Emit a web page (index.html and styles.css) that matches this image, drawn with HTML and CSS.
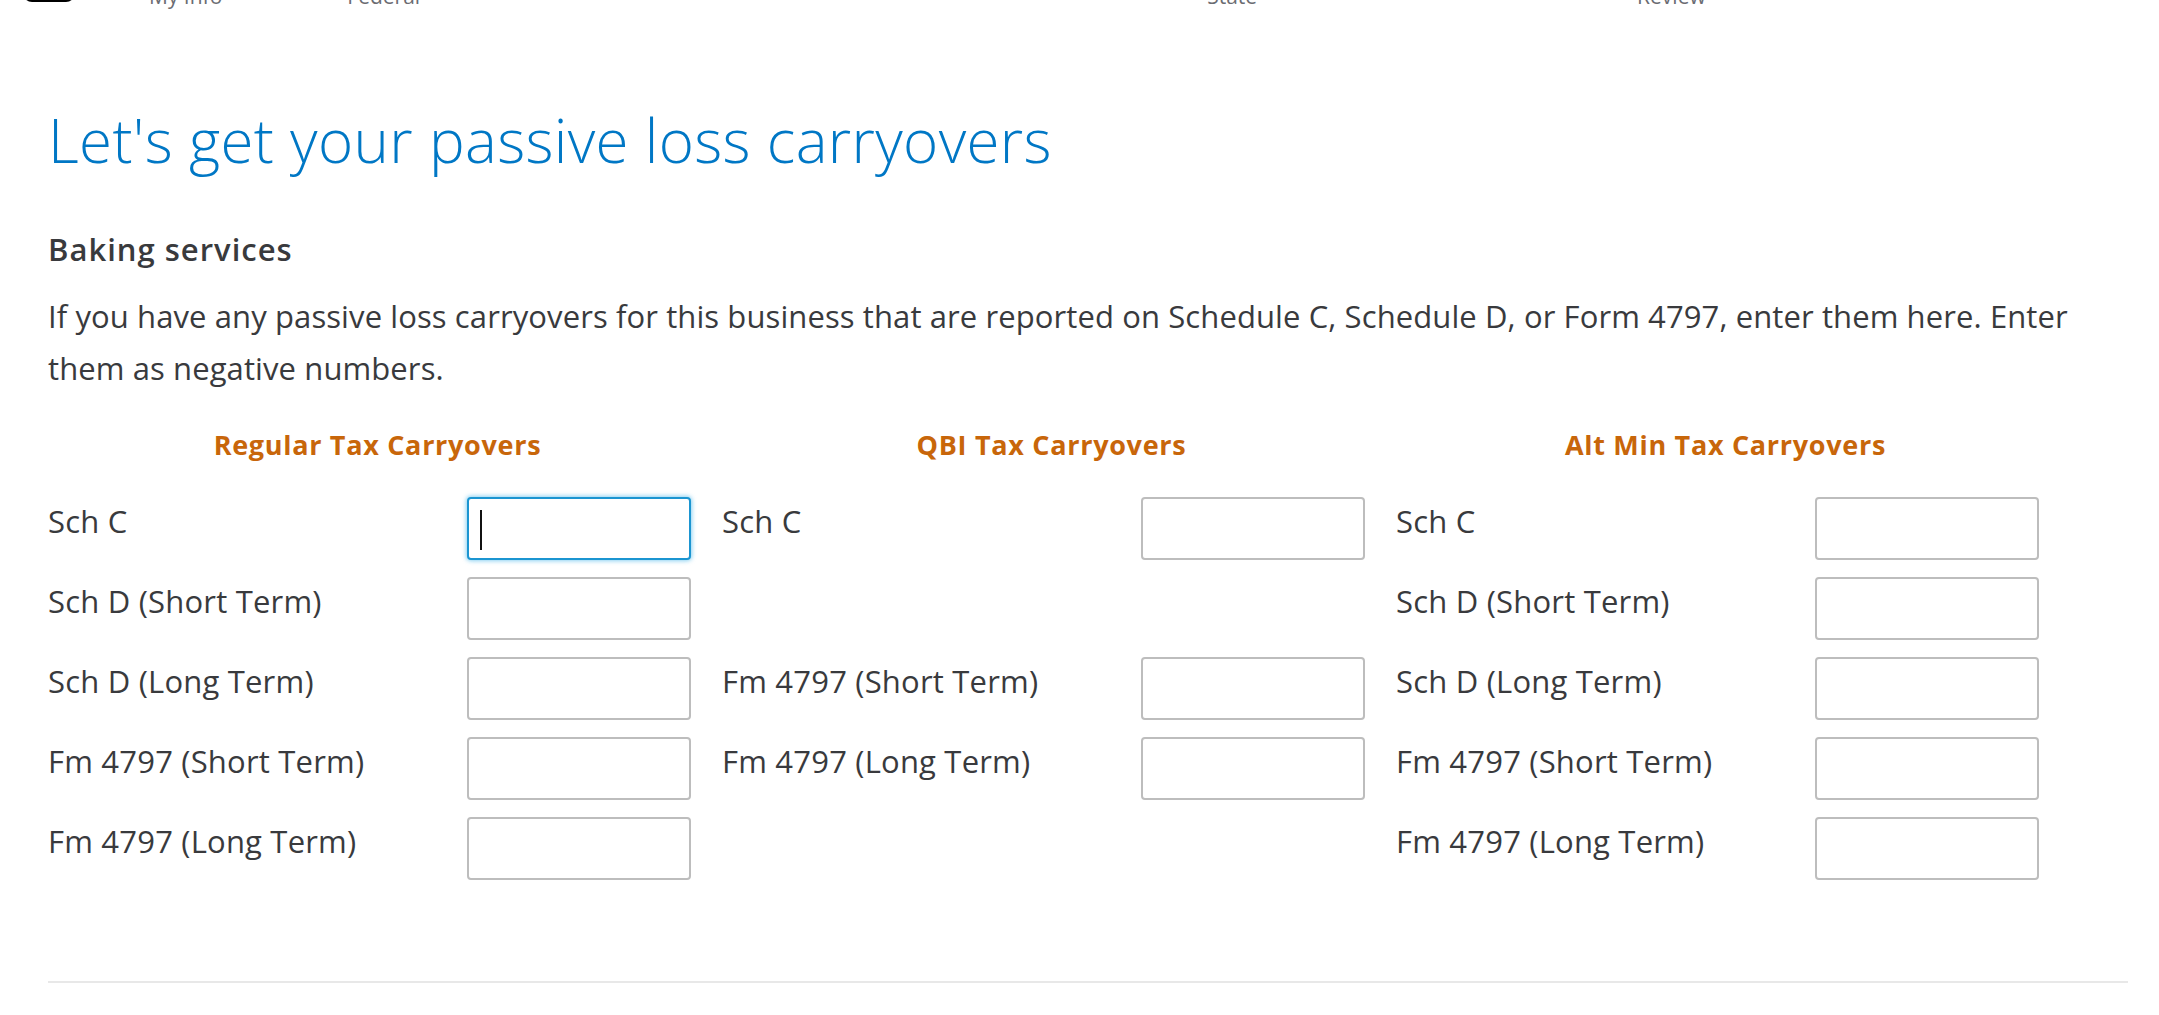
FILE: index.html
```html
<!DOCTYPE html>
<html lang="en">
<head>
<meta charset="utf-8">
<title>Passive loss carryovers</title>
<link rel="stylesheet" href="styles.css">
</head>
<body>
<div class="page">
  <nav class="stepper">
    <div class="logo"></div>
    <span class="step step-myinfo">My Info</span>
    <span class="step step-federal">Federal</span>
    <span class="step step-state">State</span>
    <span class="step step-review">Review</span>
  </nav>

  <h1 class="title">Let's get your passive loss carryovers</h1>
  <h2 class="subtitle">Baking services</h2>
  <p class="intro">If you have any passive loss carryovers for this business that are reported on Schedule C, Schedule D, or Form 4797, enter them here. Enter them as negative numbers.</p>

  <div class="grid">
    <section class="col">
      <h3 class="col-head">Regular Tax Carryovers</h3>
      <div class="row"><label class="lbl">Sch C</label><span class="field-wrap"><input class="field focused" type="text" aria-label="Regular Sch C"><span class="caret"></span></span></div>
      <div class="row"><label class="lbl">Sch D (Short Term)</label><input class="field" type="text"></div>
      <div class="row"><label class="lbl">Sch D (Long Term)</label><input class="field" type="text"></div>
      <div class="row"><label class="lbl">Fm 4797 (Short Term)</label><input class="field" type="text"></div>
      <div class="row"><label class="lbl">Fm 4797 (Long Term)</label><input class="field" type="text"></div>
    </section>
    <section class="col">
      <h3 class="col-head">QBI Tax Carryovers</h3>
      <div class="row"><label class="lbl">Sch C</label><input class="field" type="text"></div>
      <div class="row empty"></div>
      <div class="row"><label class="lbl">Fm 4797 (Short Term)</label><input class="field" type="text"></div>
      <div class="row"><label class="lbl">Fm 4797 (Long Term)</label><input class="field" type="text"></div>
      <div class="row empty"></div>
    </section>
    <section class="col">
      <h3 class="col-head">Alt Min Tax Carryovers</h3>
      <div class="row"><label class="lbl">Sch C</label><input class="field" type="text"></div>
      <div class="row"><label class="lbl">Sch D (Short Term)</label><input class="field" type="text"></div>
      <div class="row"><label class="lbl">Sch D (Long Term)</label><input class="field" type="text"></div>
      <div class="row"><label class="lbl">Fm 4797 (Short Term)</label><input class="field" type="text"></div>
      <div class="row"><label class="lbl">Fm 4797 (Long Term)</label><input class="field" type="text"></div>
    </section>
  </div>

  <hr class="divider">
</div>
</body>
</html>
```

FILE: styles.css
```css
html, body {
  margin: 0;
  padding: 0;
  background: #ffffff;
}

body {
  font-family: "Open Sans", Lato, "Liberation Sans", sans-serif;
  color: #393a3d;
  overflow: hidden;
}

.page {
  padding: 0 31px 0 48px;
}

.stepper {
  height: 10px;
  display: flex;
  align-items: flex-start;
  margin-left: -48px;
}

.logo {
  width: 52px;
  height: 22px;
  margin-top: -20px;
  margin-left: 23px;
  background: #000;
  border-radius: 9px;
}

.step {
  margin-top: -15px;
  font-size: 21px;
  line-height: 22px;
  color: #6b6c72;
}

.step-myinfo { margin-left: 74px; }
.step-federal { margin-left: 125px; }
.step-state { margin-left: 787px; }
.step-review { margin-left: 380px; }

.title {
  margin: 95px 0 0;
  font-size: 60px;
  line-height: 70px;
  font-weight: 300;
  letter-spacing: 0.35px;
  color: #0077c5;
}

.subtitle {
  margin: 56px 0 0;
  font-size: 31px;
  line-height: 36px;
  font-weight: 600;
  letter-spacing: 1px;
  color: #393a3d;
}

.intro {
  margin: 23px 0 0;
  font-size: 31px;
  line-height: 52px;
  letter-spacing: 0.1px;
  color: #393a3d;
}

.grid {
  margin-top: 35px;
  display: grid;
  grid-template-columns: 643px 643px 643px;
  column-gap: 31px;
}

.col {
  display: flex;
  flex-direction: column;
  gap: 17px;
}

.col-head {
  margin: 0 0 19px;
  padding-left: 16px;
  text-align: center;
  font-size: 27px;
  line-height: 32px;
  font-weight: 700;
  letter-spacing: 0.7px;
  color: #c8660a;
}

.row {
  height: 63px;
  display: flex;
  justify-content: space-between;
  align-items: flex-start;
}

.lbl {
  margin-top: 4px;
  font-size: 31px;
  line-height: 40px;
  letter-spacing: 0.2px;
  color: #393a3d;
}

.field-wrap {
  position: relative;
  display: block;
}

.field {
  box-sizing: border-box;
  width: 224px;
  height: 63px;
  margin: 0;
  border: 2px solid #bdbdbd;
  border-radius: 4px;
  background: #fff;
  outline: none;
  font: inherit;
  display: block;
}

.field.focused {
  border-color: #1b95d1;
  box-shadow: 0 0 4px 1px rgba(40, 170, 230, 0.55);
}

.caret {
  position: absolute;
  left: 13px;
  top: 13px;
  width: 2px;
  height: 40px;
  background: #111;
}

.divider {
  margin: 101px 0 0;
  border: 0;
  height: 2px;
  background: #e8e8e8;
}
```
